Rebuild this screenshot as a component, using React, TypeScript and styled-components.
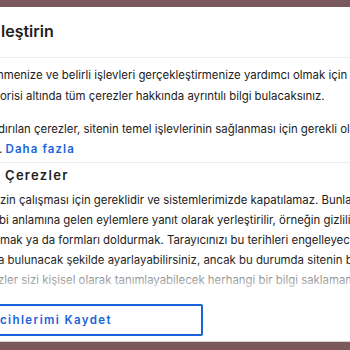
import React from 'react'
import styled, { createGlobalStyle } from 'styled-components'

const GlobalStyle = createGlobalStyle`
  html, body {
    margin: 0;
    padding: 0;
    background: #7a585b;
    overflow: hidden;
  }
  body {
    font-family: Inter, "Noto Sans", sans-serif;
    color: #212121;
  }
`

interface ShiftProps { shift?: number }

const Frame = styled.div`
  width: 350px;
  height: 350px;
  padding-top: 7px;
  box-sizing: border-box;
  overflow: hidden;
`

const Modal = styled.div`
  width: 560px;
  height: 335px;
  margin-left: -40px;
  background: #ffffff;
  border-bottom: 1px solid #d6d3d3;
  box-sizing: border-box;
  display: flex;
  flex-direction: column;
`

const Header = styled.div`
  height: 51px;
  padding-left: 40px;
  border-bottom: 1px solid #ededed;
  box-sizing: border-box;
  display: flex;
  align-items: center;
`

const Title = styled.h2<ShiftProps>`
  margin: 0 0 2px ${(p) => p.shift || 0}px;
  font-size: 16px;
  font-weight: 600;
  color: #212121;
  white-space: nowrap;
`

const Body = styled.div`
  position: relative;
  flex: 1;
  padding: 7px 0 0 40px;
  overflow: hidden;
`

const Para = styled.div<{ lh: number; gap?: number }>`
  margin-top: ${(p) => p.gap || 0}px;
  font-size: 11.4px;
  line-height: ${(p) => p.lh}px;
  color: #212121;
`

const Line = styled.div<ShiftProps>`
  margin-left: ${(p) => p.shift || 0}px;
  white-space: nowrap;
`

const MoreLink = styled.span`
  color: #1863dc;
  font-size: 11.5px;
  font-weight: 600;
  letter-spacing: 1.1px;
`

const Section = styled.div`
  margin-top: 3px;
  border-top: 1px solid #ededed;
  padding-top: 2px;
`

const SectionTitle = styled.h3<ShiftProps>`
  margin: 0 0 5px ${(p) => p.shift || 0}px;
  font-size: 13px;
  line-height: 20px;
  font-weight: 600;
  letter-spacing: 1.3px;
  color: #212121;
`

const Fade = styled.div`
  position: absolute;
  left: 0;
  right: 0;
  bottom: 0;
  height: 34px;
  background: linear-gradient(rgba(255, 255, 255, 0), rgba(255, 255, 255, 0.45) 45%, rgba(255, 255, 255, 0.9));
`

const Footer = styled.div`
  height: 47px;
  padding: 10px 0 0 0;
  box-sizing: border-box;
`

const SaveButton = styled.button`
  height: 32px;
  width: 243px;
  padding: 0 0 0 38px;
  border: 2px solid #1863dc;
  border-radius: 2px;
  background: #ffffff;
  color: #1863dc;
  font-family: Inter, "Noto Sans", sans-serif;
  font-size: 11.5px;
  font-weight: 600;
  letter-spacing: 1.4px;
  text-align: left;
  white-space: nowrap;
`

export default function App() {
  return (
    <Frame>
      <GlobalStyle />
      <Modal>
        <Header>
          <Title shift={1}>leştirin</Title>
        </Header>
        <Body>
          <Para lh={21}>
            <Line shift={-3}>nmenize ve belirli işlevleri gerçekleştirmenize yardımcı olmak için çerezler kullanıyoruz.</Line>
            <Line>orisi altında tüm çerezler hakkında ayrıntılı bilgi bulacaksınız.</Line>
          </Para>
          <Para lh={20} gap={12}>
            <Line shift={-2}>dırılan çerezler, sitenin temel işlevlerinin sağlanması için gerekli oldukları için</Line>
            <Line shift={-1}>. <MoreLink>Daha fazla</MoreLink></Line>
          </Para>
          <Section>
            <SectionTitle shift={5}>Çerezler</SectionTitle>
            <Para lh={20}>
              <Line>zin çalışması için gereklidir ve sistemlerimizde kapatılamaz. Bunlar genellikle</Line>
              <Line shift={-1}>bi anlamına gelen eylemlere yanıt olarak yerleştirilir, örneğin gizlilik tercihlerinizi</Line>
              <Line>mak ya da formları doldurmak. Tarayıcınızı bu terihleri engelleyecek ya da</Line>
              <Line shift={-2}>a bulunacak şekilde ayarlayabilirsiniz, ancak bu durumda sitenin bazı bölümleri</Line>
              <Line shift={-2}>zler sizi kişisel olarak tanımlayabilecek herhangi bir bilgi saklamamaktadır.</Line>
            </Para>
          </Section>
          <Fade />
        </Body>
        <Footer>
          <SaveButton>cihlerimi Kaydet</SaveButton>
        </Footer>
      </Modal>
    </Frame>
  )
}
